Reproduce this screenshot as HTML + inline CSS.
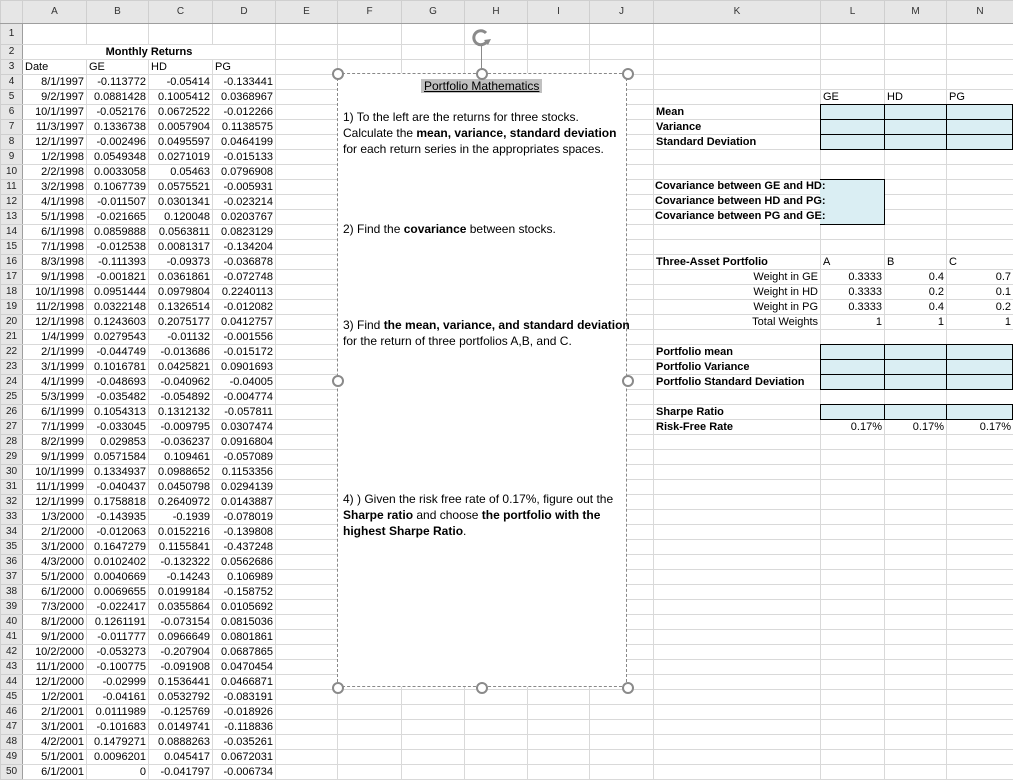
<!DOCTYPE html>
<html><head><meta charset="utf-8"><style>
body{margin:0;width:1013px;height:777px;overflow:hidden;background:#fff;font-family:"Liberation Sans",sans-serif;font-size:11px;color:#000;position:relative}
table{border-collapse:collapse;table-layout:fixed;position:absolute;left:0;top:0;width:1013px}
td{border:1px solid #d9d9d9;padding:0 2px;height:14px;line-height:14px;white-space:nowrap;overflow:visible}
tr.h td{background:#e6e6e6;border-color:#cfcfcf;text-align:center;height:22px;font-size:10px;color:#333;border-bottom:1px solid #9e9e9e}
td.rh{background:#e6e6e6;border-color:#cfcfcf;text-align:center;font-size:10px;color:#222;padding:0;border-right:1px solid #9e9e9e}
.r{text-align:right}.b{font-weight:bold}.c{text-align:center}
.blue{position:absolute;background:#daeef3;border:1px solid #000;box-sizing:border-box}
#tb{position:absolute;left:337px;top:73px;width:290px;height:614px;background:#fff;border:1px dashed #888;box-sizing:border-box;font-size:12px;line-height:16px}
#tb p{position:absolute;left:5px;margin:0;white-space:nowrap}
.hd{position:absolute;width:8px;height:8px;border:2px solid #8a8a8a;border-radius:50%;background:#fff}
</style></head><body>
<table>
<colgroup><col style="width:22px"><col style="width:64px"><col style="width:62px"><col style="width:64px"><col style="width:63px"><col style="width:62px"><col style="width:64px"><col style="width:63px"><col style="width:63px"><col style="width:62px"><col style="width:64px"><col style="width:167px"><col style="width:64px"><col style="width:62px"><col style="width:67px"></colgroup>
<tr class="h"><td></td><td>A</td><td>B</td><td>C</td><td>D</td><td>E</td><td>F</td><td>G</td><td>H</td><td>I</td><td>J</td><td>K</td><td>L</td><td>M</td><td>N</td></tr>
<tr style="height:21px"><td class="rh" style="height:20px">1</td><td></td><td></td><td></td><td></td><td></td><td></td><td></td><td></td><td></td><td></td><td></td><td></td><td></td><td></td></tr>
<tr><td class="rh">2</td><td colspan="4" class="c b">Monthly Returns</td><td></td><td></td><td></td><td></td><td></td><td></td><td></td><td></td><td></td><td></td></tr>
<tr><td class="rh">3</td><td>Date</td><td>GE</td><td>HD</td><td>PG</td><td></td><td></td><td></td><td></td><td></td><td></td><td></td><td></td><td></td><td></td></tr>
<tr><td class="rh">4</td><td class="r">8/1/1997</td><td class="r">-0.113772</td><td class="r">-0.05414</td><td class="r">-0.133441</td><td></td><td></td><td></td><td></td><td></td><td></td><td></td><td></td><td></td><td></td></tr>
<tr><td class="rh">5</td><td class="r">9/2/1997</td><td class="r">0.0881428</td><td class="r">0.1005412</td><td class="r">0.0368967</td><td></td><td></td><td></td><td></td><td></td><td></td><td></td><td>GE</td><td>HD</td><td>PG</td></tr>
<tr><td class="rh">6</td><td class="r">10/1/1997</td><td class="r">-0.052176</td><td class="r">0.0672522</td><td class="r">-0.012266</td><td></td><td></td><td></td><td></td><td></td><td></td><td class="b">Mean</td><td></td><td></td><td></td></tr>
<tr><td class="rh">7</td><td class="r">11/3/1997</td><td class="r">0.1336738</td><td class="r">0.0057904</td><td class="r">0.1138575</td><td></td><td></td><td></td><td></td><td></td><td></td><td class="b">Variance</td><td></td><td></td><td></td></tr>
<tr><td class="rh">8</td><td class="r">12/1/1997</td><td class="r">-0.002496</td><td class="r">0.0495597</td><td class="r">0.0464199</td><td></td><td></td><td></td><td></td><td></td><td></td><td class="b">Standard Deviation</td><td></td><td></td><td></td></tr>
<tr><td class="rh">9</td><td class="r">1/2/1998</td><td class="r">0.0549348</td><td class="r">0.0271019</td><td class="r">-0.015133</td><td></td><td></td><td></td><td></td><td></td><td></td><td></td><td></td><td></td><td></td></tr>
<tr><td class="rh">10</td><td class="r">2/2/1998</td><td class="r">0.0033058</td><td class="r">0.05463</td><td class="r">0.0796908</td><td></td><td></td><td></td><td></td><td></td><td></td><td></td><td></td><td></td><td></td></tr>
<tr><td class="rh">11</td><td class="r">3/2/1998</td><td class="r">0.1067739</td><td class="r">0.0575521</td><td class="r">-0.005931</td><td></td><td></td><td></td><td></td><td></td><td></td><td></td><td></td><td></td><td></td></tr>
<tr><td class="rh">12</td><td class="r">4/1/1998</td><td class="r">-0.011507</td><td class="r">0.0301341</td><td class="r">-0.023214</td><td></td><td></td><td></td><td></td><td></td><td></td><td></td><td></td><td></td><td></td></tr>
<tr><td class="rh">13</td><td class="r">5/1/1998</td><td class="r">-0.021665</td><td class="r">0.120048</td><td class="r">0.0203767</td><td></td><td></td><td></td><td></td><td></td><td></td><td></td><td></td><td></td><td></td></tr>
<tr><td class="rh">14</td><td class="r">6/1/1998</td><td class="r">0.0859888</td><td class="r">0.0563811</td><td class="r">0.0823129</td><td></td><td></td><td></td><td></td><td></td><td></td><td></td><td></td><td></td><td></td></tr>
<tr><td class="rh">15</td><td class="r">7/1/1998</td><td class="r">-0.012538</td><td class="r">0.0081317</td><td class="r">-0.134204</td><td></td><td></td><td></td><td></td><td></td><td></td><td></td><td></td><td></td><td></td></tr>
<tr><td class="rh">16</td><td class="r">8/3/1998</td><td class="r">-0.111393</td><td class="r">-0.09373</td><td class="r">-0.036878</td><td></td><td></td><td></td><td></td><td></td><td></td><td class="b">Three-Asset Portfolio</td><td>A</td><td>B</td><td>C</td></tr>
<tr><td class="rh">17</td><td class="r">9/1/1998</td><td class="r">-0.001821</td><td class="r">0.0361861</td><td class="r">-0.072748</td><td></td><td></td><td></td><td></td><td></td><td></td><td class="r">Weight in GE</td><td class="r">0.3333</td><td class="r">0.4</td><td class="r">0.7</td></tr>
<tr><td class="rh">18</td><td class="r">10/1/1998</td><td class="r">0.0951444</td><td class="r">0.0979804</td><td class="r">0.2240113</td><td></td><td></td><td></td><td></td><td></td><td></td><td class="r">Weight in HD</td><td class="r">0.3333</td><td class="r">0.2</td><td class="r">0.1</td></tr>
<tr><td class="rh">19</td><td class="r">11/2/1998</td><td class="r">0.0322148</td><td class="r">0.1326514</td><td class="r">-0.012082</td><td></td><td></td><td></td><td></td><td></td><td></td><td class="r">Weight in PG</td><td class="r">0.3333</td><td class="r">0.4</td><td class="r">0.2</td></tr>
<tr><td class="rh">20</td><td class="r">12/1/1998</td><td class="r">0.1243603</td><td class="r">0.2075177</td><td class="r">0.0412757</td><td></td><td></td><td></td><td></td><td></td><td></td><td class="r">Total Weights</td><td class="r">1</td><td class="r">1</td><td class="r">1</td></tr>
<tr><td class="rh">21</td><td class="r">1/4/1999</td><td class="r">0.0279543</td><td class="r">-0.01132</td><td class="r">-0.001556</td><td></td><td></td><td></td><td></td><td></td><td></td><td></td><td></td><td></td><td></td></tr>
<tr><td class="rh">22</td><td class="r">2/1/1999</td><td class="r">-0.044749</td><td class="r">-0.013686</td><td class="r">-0.015172</td><td></td><td></td><td></td><td></td><td></td><td></td><td class="b">Portfolio mean</td><td></td><td></td><td></td></tr>
<tr><td class="rh">23</td><td class="r">3/1/1999</td><td class="r">0.1016781</td><td class="r">0.0425821</td><td class="r">0.0901693</td><td></td><td></td><td></td><td></td><td></td><td></td><td class="b">Portfolio Variance</td><td></td><td></td><td></td></tr>
<tr><td class="rh">24</td><td class="r">4/1/1999</td><td class="r">-0.048693</td><td class="r">-0.040962</td><td class="r">-0.04005</td><td></td><td></td><td></td><td></td><td></td><td></td><td class="b">Portfolio Standard Deviation</td><td></td><td></td><td></td></tr>
<tr><td class="rh">25</td><td class="r">5/3/1999</td><td class="r">-0.035482</td><td class="r">-0.054892</td><td class="r">-0.004774</td><td></td><td></td><td></td><td></td><td></td><td></td><td></td><td></td><td></td><td></td></tr>
<tr><td class="rh">26</td><td class="r">6/1/1999</td><td class="r">0.1054313</td><td class="r">0.1312132</td><td class="r">-0.057811</td><td></td><td></td><td></td><td></td><td></td><td></td><td class="b">Sharpe Ratio</td><td></td><td></td><td></td></tr>
<tr><td class="rh">27</td><td class="r">7/1/1999</td><td class="r">-0.033045</td><td class="r">-0.009795</td><td class="r">0.0307474</td><td></td><td></td><td></td><td></td><td></td><td></td><td class="b">Risk-Free Rate</td><td class="r">0.17%</td><td class="r">0.17%</td><td class="r">0.17%</td></tr>
<tr><td class="rh">28</td><td class="r">8/2/1999</td><td class="r">0.029853</td><td class="r">-0.036237</td><td class="r">0.0916804</td><td></td><td></td><td></td><td></td><td></td><td></td><td></td><td></td><td></td><td></td></tr>
<tr><td class="rh">29</td><td class="r">9/1/1999</td><td class="r">0.0571584</td><td class="r">0.109461</td><td class="r">-0.057089</td><td></td><td></td><td></td><td></td><td></td><td></td><td></td><td></td><td></td><td></td></tr>
<tr><td class="rh">30</td><td class="r">10/1/1999</td><td class="r">0.1334937</td><td class="r">0.0988652</td><td class="r">0.1153356</td><td></td><td></td><td></td><td></td><td></td><td></td><td></td><td></td><td></td><td></td></tr>
<tr><td class="rh">31</td><td class="r">11/1/1999</td><td class="r">-0.040437</td><td class="r">0.0450798</td><td class="r">0.0294139</td><td></td><td></td><td></td><td></td><td></td><td></td><td></td><td></td><td></td><td></td></tr>
<tr><td class="rh">32</td><td class="r">12/1/1999</td><td class="r">0.1758818</td><td class="r">0.2640972</td><td class="r">0.0143887</td><td></td><td></td><td></td><td></td><td></td><td></td><td></td><td></td><td></td><td></td></tr>
<tr><td class="rh">33</td><td class="r">1/3/2000</td><td class="r">-0.143935</td><td class="r">-0.1939</td><td class="r">-0.078019</td><td></td><td></td><td></td><td></td><td></td><td></td><td></td><td></td><td></td><td></td></tr>
<tr><td class="rh">34</td><td class="r">2/1/2000</td><td class="r">-0.012063</td><td class="r">0.0152216</td><td class="r">-0.139808</td><td></td><td></td><td></td><td></td><td></td><td></td><td></td><td></td><td></td><td></td></tr>
<tr><td class="rh">35</td><td class="r">3/1/2000</td><td class="r">0.1647279</td><td class="r">0.1155841</td><td class="r">-0.437248</td><td></td><td></td><td></td><td></td><td></td><td></td><td></td><td></td><td></td><td></td></tr>
<tr><td class="rh">36</td><td class="r">4/3/2000</td><td class="r">0.0102402</td><td class="r">-0.132322</td><td class="r">0.0562686</td><td></td><td></td><td></td><td></td><td></td><td></td><td></td><td></td><td></td><td></td></tr>
<tr><td class="rh">37</td><td class="r">5/1/2000</td><td class="r">0.0040669</td><td class="r">-0.14243</td><td class="r">0.106989</td><td></td><td></td><td></td><td></td><td></td><td></td><td></td><td></td><td></td><td></td></tr>
<tr><td class="rh">38</td><td class="r">6/1/2000</td><td class="r">0.0069655</td><td class="r">0.0199184</td><td class="r">-0.158752</td><td></td><td></td><td></td><td></td><td></td><td></td><td></td><td></td><td></td><td></td></tr>
<tr><td class="rh">39</td><td class="r">7/3/2000</td><td class="r">-0.022417</td><td class="r">0.0355864</td><td class="r">0.0105692</td><td></td><td></td><td></td><td></td><td></td><td></td><td></td><td></td><td></td><td></td></tr>
<tr><td class="rh">40</td><td class="r">8/1/2000</td><td class="r">0.1261191</td><td class="r">-0.073154</td><td class="r">0.0815036</td><td></td><td></td><td></td><td></td><td></td><td></td><td></td><td></td><td></td><td></td></tr>
<tr><td class="rh">41</td><td class="r">9/1/2000</td><td class="r">-0.011777</td><td class="r">0.0966649</td><td class="r">0.0801861</td><td></td><td></td><td></td><td></td><td></td><td></td><td></td><td></td><td></td><td></td></tr>
<tr><td class="rh">42</td><td class="r">10/2/2000</td><td class="r">-0.053273</td><td class="r">-0.207904</td><td class="r">0.0687865</td><td></td><td></td><td></td><td></td><td></td><td></td><td></td><td></td><td></td><td></td></tr>
<tr><td class="rh">43</td><td class="r">11/1/2000</td><td class="r">-0.100775</td><td class="r">-0.091908</td><td class="r">0.0470454</td><td></td><td></td><td></td><td></td><td></td><td></td><td></td><td></td><td></td><td></td></tr>
<tr><td class="rh">44</td><td class="r">12/1/2000</td><td class="r">-0.02999</td><td class="r">0.1536441</td><td class="r">0.0466871</td><td></td><td></td><td></td><td></td><td></td><td></td><td></td><td></td><td></td><td></td></tr>
<tr><td class="rh">45</td><td class="r">1/2/2001</td><td class="r">-0.04161</td><td class="r">0.0532792</td><td class="r">-0.083191</td><td></td><td></td><td></td><td></td><td></td><td></td><td></td><td></td><td></td><td></td></tr>
<tr><td class="rh">46</td><td class="r">2/1/2001</td><td class="r">0.0111989</td><td class="r">-0.125769</td><td class="r">-0.018926</td><td></td><td></td><td></td><td></td><td></td><td></td><td></td><td></td><td></td><td></td></tr>
<tr><td class="rh">47</td><td class="r">3/1/2001</td><td class="r">-0.101683</td><td class="r">0.0149741</td><td class="r">-0.118836</td><td></td><td></td><td></td><td></td><td></td><td></td><td></td><td></td><td></td><td></td></tr>
<tr><td class="rh">48</td><td class="r">4/2/2001</td><td class="r">0.1479271</td><td class="r">0.0888263</td><td class="r">-0.035261</td><td></td><td></td><td></td><td></td><td></td><td></td><td></td><td></td><td></td><td></td></tr>
<tr><td class="rh">49</td><td class="r">5/1/2001</td><td class="r">0.0096201</td><td class="r">0.045417</td><td class="r">0.0672031</td><td></td><td></td><td></td><td></td><td></td><td></td><td></td><td></td><td></td><td></td></tr>
<tr><td class="rh">50</td><td class="r">6/1/2001</td><td class="r">0</td><td class="r">-0.041797</td><td class="r">-0.006734</td><td></td><td></td><td></td><td></td><td></td><td></td><td></td><td></td><td></td><td></td></tr>
</table>

<div class="blue" style="left:820px;top:104px;width:65px;height:16px"></div>
<div class="blue" style="left:884px;top:104px;width:63px;height:16px"></div>
<div class="blue" style="left:946px;top:104px;width:67px;height:16px"></div>
<div class="blue" style="left:820px;top:119px;width:65px;height:16px"></div>
<div class="blue" style="left:884px;top:119px;width:63px;height:16px"></div>
<div class="blue" style="left:946px;top:119px;width:67px;height:16px"></div>
<div class="blue" style="left:820px;top:134px;width:65px;height:16px"></div>
<div class="blue" style="left:884px;top:134px;width:63px;height:16px"></div>
<div class="blue" style="left:946px;top:134px;width:67px;height:16px"></div>
<div style="position:absolute;left:820px;top:179px;width:65px;height:46px;background:#daeef3;border:1px solid #000;border-left:none;box-sizing:border-box"></div>
<div class="blue" style="left:820px;top:344px;width:65px;height:16px"></div>
<div class="blue" style="left:884px;top:344px;width:63px;height:16px"></div>
<div class="blue" style="left:946px;top:344px;width:67px;height:16px"></div>
<div class="blue" style="left:820px;top:359px;width:65px;height:16px"></div>
<div class="blue" style="left:884px;top:359px;width:63px;height:16px"></div>
<div class="blue" style="left:946px;top:359px;width:67px;height:16px"></div>
<div class="blue" style="left:820px;top:374px;width:65px;height:16px"></div>
<div class="blue" style="left:884px;top:374px;width:63px;height:16px"></div>
<div class="blue" style="left:946px;top:374px;width:67px;height:16px"></div>
<div class="blue" style="left:820px;top:404px;width:65px;height:16px"></div>
<div class="blue" style="left:884px;top:404px;width:63px;height:16px"></div>
<div class="blue" style="left:946px;top:404px;width:67px;height:16px"></div>
<div class="b" style="position:absolute;left:655px;top:179px;line-height:15px;font-size:11px">Covariance between GE and HD:<br>Covariance between HD and PG:<br>Covariance between PG and GE:</div>

<div style="position:absolute;left:481px;top:46px;width:1px;height:27px;background:#8a8a8a"></div>
<svg style="position:absolute;left:471px;top:28px" width="22" height="20" viewBox="0 0 22 20"><path d="M15 5 A7 7 0 1 0 16 13" fill="none" stroke="#8a8a8a" stroke-width="3"/><path d="M13 12 L20 11 L17 17 Z" fill="#8a8a8a"/></svg>
<div id="tb">
<p style="left:83px;top:4px"><span style="background:#c0c0c0;text-decoration:underline;padding:0 3px">Portfolio Mathematics</span></p>
<p style="top:35px">1) To the left are the returns for three stocks.<br>Calculate the <b>mean, variance, standard deviation</b><br>for each return series in the appropriates spaces.</p>
<p style="top:147px">2) Find the <b>covariance</b> between stocks.</p>
<p style="top:243px">3) Find <b>the mean, variance, and standard deviation</b><br>for the return of three portfolios A,B, and C.</p>
<p style="top:417px">4) ) Given the risk free rate of 0.17%, figure out the<br><b>Sharpe ratio</b> and choose <b>the portfolio with the<br>highest Sharpe Ratio</b>.</p>
</div>
<div class="hd" style="left:332px;top:68px"></div>
<div class="hd" style="left:476px;top:68px"></div>
<div class="hd" style="left:622px;top:68px"></div>
<div class="hd" style="left:332px;top:375px"></div>
<div class="hd" style="left:622px;top:375px"></div>
<div class="hd" style="left:332px;top:682px"></div>
<div class="hd" style="left:476px;top:682px"></div>
<div class="hd" style="left:622px;top:682px"></div>
</body></html>
